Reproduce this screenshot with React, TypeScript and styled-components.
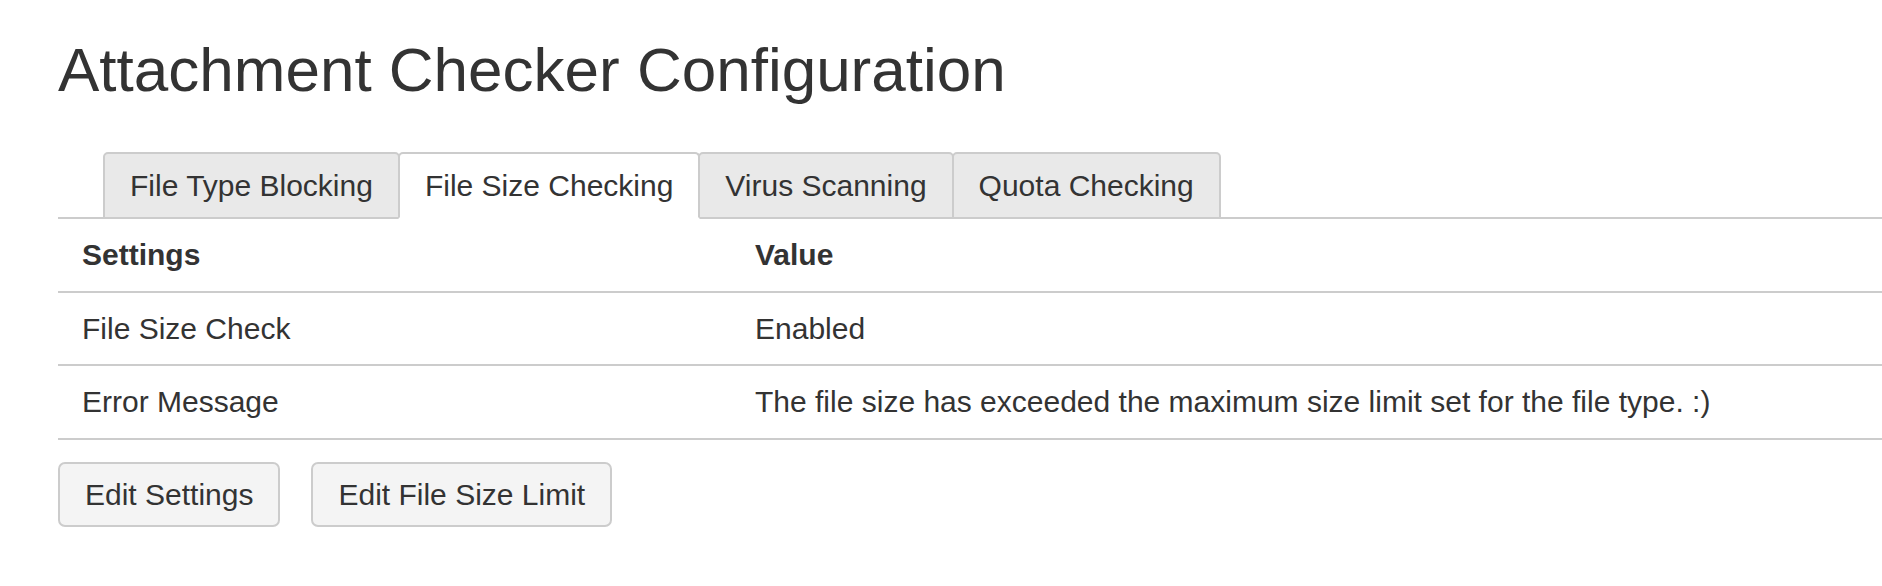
import styled, { createGlobalStyle } from 'styled-components';

const GlobalStyle = createGlobalStyle`
  html, body {
    margin: 0;
    padding: 0;
    background: #fff;
  }

  body {
    font-family: 'Liberation Sans', Arial, Helvetica, sans-serif;
    color: #333;
  }
`;

const Page = styled.main`
  padding: 0 0 0 58px;
  overflow: hidden;
`;

const Title = styled.h1`
  margin: 36px 0 49px;
  font-size: 62px;
  line-height: 67px;
  font-weight: 400;
  color: #333;
`;

const TabList = styled.ul`
  display: flex;
  list-style: none;
  margin: 0;
  padding: 0 0 0 45px;
  border-bottom: 2px solid #ccc;
`;

const Tab = styled.li<{ $active?: boolean }>`
  margin: 0 0 -2px -2px;
  padding: 11px 25px;
  font-size: 30px;
  line-height: 41px;
  border: 2px solid #ccc;
  border-bottom-color: ${(props) => (props.$active ? '#fff' : '#ccc')};
  border-radius: 5px 5px 0 0;
  background: ${(props) => (props.$active ? '#fff' : '#e9e9e9')};
  cursor: pointer;
  position: relative;
  z-index: ${(props) => (props.$active ? 1 : 0)};

  &:first-child {
    margin-left: 0;
  }
`;

const Table = styled.table`
  width: 100%;
  border-collapse: collapse;
  table-layout: fixed;
  font-size: 30px;

  th,
  td {
    text-align: left;
    padding: 14px 24px;
    line-height: 43.5px;
    border-bottom: 2px solid #ccc;
    white-space: nowrap;
  }

  th {
    font-weight: 700;
  }
`;

const Actions = styled.div`
  display: flex;
  gap: 31px;
  margin-top: 22px;
`;

const Button = styled.button`
  font-family: inherit;
  font-size: 30px;
  line-height: 61px;
  padding: 0 25px;
  color: #333;
  background: #f4f4f4;
  border: 2px solid #ccc;
  border-radius: 7px;
  cursor: pointer;
`;

const tabs = ['File Type Blocking', 'File Size Checking', 'Virus Scanning', 'Quota Checking'];

const rows = [
  { name: 'File Size Check', value: 'Enabled' },
  {
    name: 'Error Message',
    value: 'The file size has exceeded the maximum size limit set for the file type. :)',
  },
];

const App = () => {
  return (
    <>
      <GlobalStyle />
      <Page>
        <Title>Attachment Checker Configuration</Title>
        <TabList>
          {tabs.map((tab) => (
            <Tab key={tab} $active={tab === 'File Size Checking'}>
              {tab}
            </Tab>
          ))}
        </TabList>
        <Table>
          <colgroup>
            <col style={{ width: 673 }} />
            <col />
          </colgroup>
          <thead>
            <tr>
              <th>Settings</th>
              <th>Value</th>
            </tr>
          </thead>
          <tbody>
            {rows.map((row) => (
              <tr key={row.name}>
                <td>{row.name}</td>
                <td>{row.value}</td>
              </tr>
            ))}
          </tbody>
        </Table>
        <Actions>
          <Button>Edit Settings</Button>
          <Button>Edit File Size Limit</Button>
        </Actions>
      </Page>
    </>
  );
};

export default App;
